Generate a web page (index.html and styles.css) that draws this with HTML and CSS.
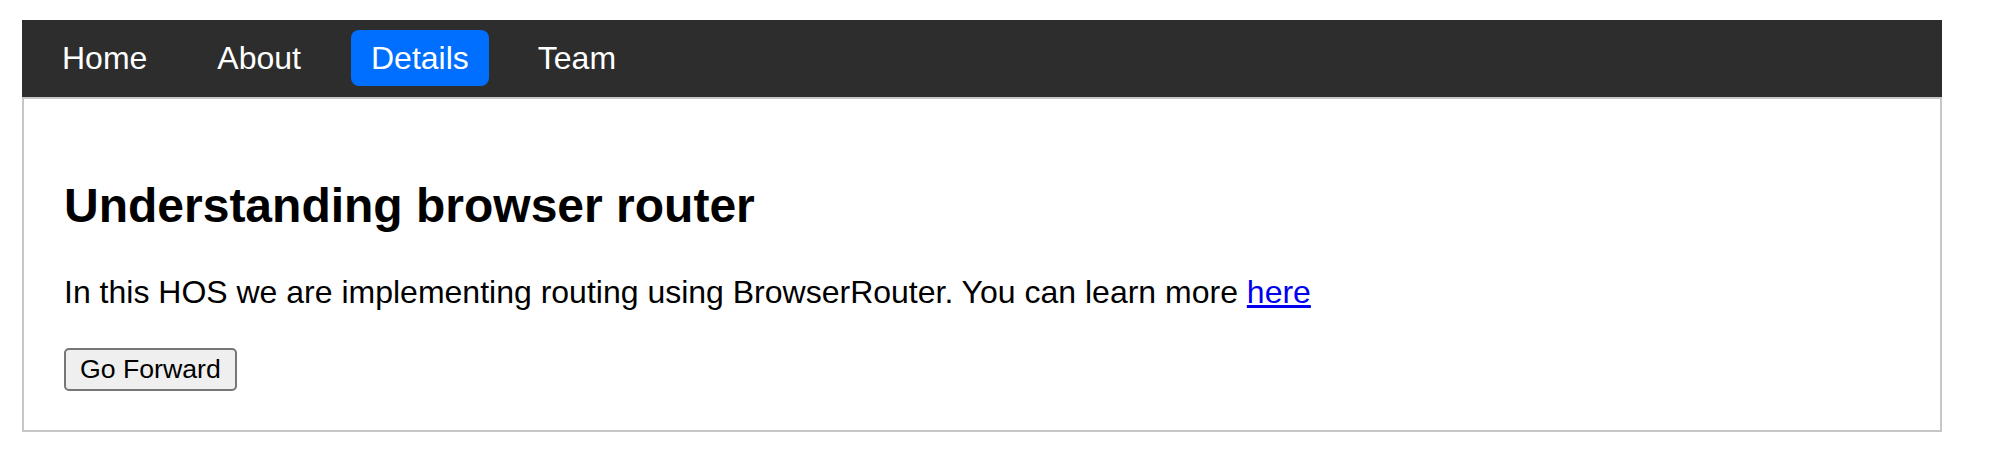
FILE: index.html
```html
<!DOCTYPE html>
<html lang="en">
<head>
<meta charset="utf-8">
<title>Understanding browser router</title>
<link rel="stylesheet" href="styles.css">
</head>
<body>
<div class="app">
  <nav class="navbar">
    <a class="nav-link" href="#">Home</a>
    <a class="nav-link" href="#">About</a>
    <a class="nav-link active" href="#">Details</a>
    <a class="nav-link" href="#">Team</a>
  </nav>
  <main class="content">
    <h2 class="title">Understanding browser router</h2>
    <p class="text">In this HOS we are implementing routing using BrowserRouter. You can learn more <a class="link" href="#">here</a></p>
    <button class="btn" type="button">Go Forward</button>
  </main>
</div>
</body>
</html>
```

FILE: styles.css
```css
html, body {
  margin: 0;
  padding: 0;
  background: #ffffff;
}

body {
  font-family: "Liberation Sans", Arial, sans-serif;
  color: #000000;
}

.app {
  width: 1920px;
  margin: 20px 0 0 22px;
}

.navbar {
  display: flex;
  align-items: center;
  gap: 28px;
  background: #2d2d2d;
  padding: 10px 20px 11px 19px;
  height: 56px;
}

.nav-link {
  display: block;
  color: #ffffff;
  text-decoration: none;
  font-size: 32px;
  line-height: 37px;
  padding: 9.5px 21px;
  border-radius: 8px;
}

.nav-link.active {
  margin-left: 1px;
  padding: 9.5px 20px;
  background: #006fff;
}

.content {
  border: 2px solid #c6c6c6;
  padding: 39px 40px 39px;
}

.title {
  margin: 40px 0 0;
  font-size: 48px;
  line-height: 55px;
  font-weight: bold;
}

.text {
  margin: 41px 0 0;
  font-size: 32px;
  line-height: 37px;
}

.link {
  color: #0000ee;
  text-decoration: underline;
}

.btn {
  display: block;
  margin: 37px 0 0;
  height: 43px;
  padding: 0 14px;
  font-family: "Liberation Sans", Arial, sans-serif;
  font-size: 26.67px;
  color: #000000;
  background: #efefef;
  border: 2px solid #767676;
  border-radius: 5px;
}
```
